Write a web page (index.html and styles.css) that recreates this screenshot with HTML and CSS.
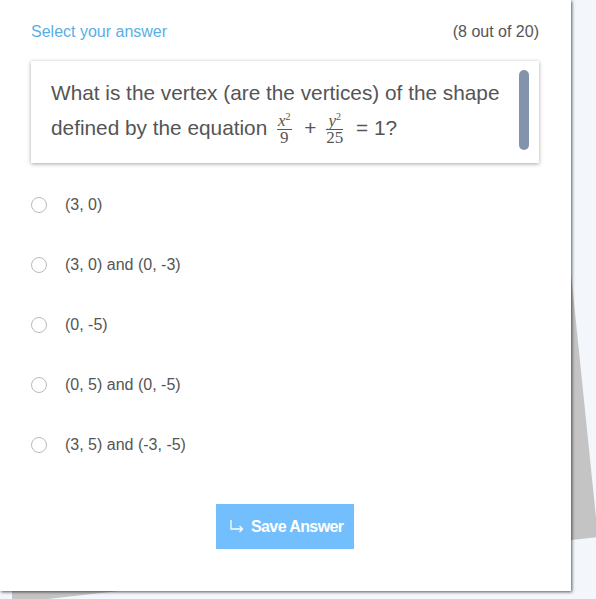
FILE: index.html
```html
<!DOCTYPE html>
<html lang="en">
<head>
    <meta charset="UTF-8">
    <meta name="viewport" content="width=device-width, initial-scale=1.0">
    <title>Quiz Question</title>
    <link rel="stylesheet" href="styles.css">
</head>
<body>

    <!-- Paper stack behind the card -->
    <svg class="paper-back" width="596" height="599" viewBox="0 0 596 599">
        <polygon points="543,0 598,537 12,603 12,0" fill="#c4c4c4"/>
    </svg>

    <!-- Question Card -->
    <div class="card">
        <div class="card-head">
            <span class="select-label">Select your answer</span>
            <span class="counter">(8 out of 20)</span>
        </div>

        <div class="question">
            <p>What is the vertex (are the vertices) of the shape defined by the equation
                <span class="frac"><span class="num"><i>x</i><sup>2</sup></span><span class="den">9</span></span>
                +
                <span class="frac"><span class="num"><i>y</i><sup>2</sup></span><span class="den">25</span></span>
                = 1?</p>
            <div class="scroll-thumb"></div>
        </div>

        <div class="options">
            <label class="option"><input type="radio" name="answer"><span>(3, 0)</span></label>
            <label class="option"><input type="radio" name="answer"><span>(3, 0) and (0, -3)</span></label>
            <label class="option"><input type="radio" name="answer"><span>(0, -5)</span></label>
            <label class="option"><input type="radio" name="answer"><span>(0, 5) and (0, -5)</span></label>
            <label class="option"><input type="radio" name="answer"><span>(3, 5) and (-3, -5)</span></label>
        </div>

        <div class="actions">
            <button class="save-btn">
                <svg width="15" height="15" viewBox="0 0 15 15">
                    <path d="M2 1 V10 H13.5 M10.5 7 L13.5 10 L10.5 13" fill="none" stroke="#fff" stroke-width="1.3"/>
                </svg>
                Save Answer
            </button>
        </div>
    </div>

</body>
</html>
```

FILE: styles.css
```css
body {
    font-family: "Liberation Sans", Arial, sans-serif;
    margin: 0;
    padding: 0;
    background-color: #f3f7fb;
    position: relative;
    height: 599px;
    overflow: hidden;
}
.paper-back {
    position: absolute;
    left: 0;
    top: 0;
}
.card {
    position: relative;
    width: 571px;
    box-sizing: border-box;
    background: #fff;
    padding: 23px 32px 42px 31px;
    box-shadow: 1px 1px 3px rgba(0, 0, 0, 0.65);
}
.card-head {
    display: flex;
    justify-content: space-between;
    font-size: 16px;
    line-height: 18px;
}
.select-label {
    color: #5aaee6;
}
.counter {
    color: #555;
}
.question {
    position: relative;
    margin-top: 20px;
    padding: 14px 28px 17px 20px;
    box-shadow: 0 1px 4px rgba(0, 0, 0, 0.35);
}
.question p {
    margin: 0;
    font-size: 20.8px;
    line-height: 35px;
    color: #555;
}
.frac {
    display: inline-flex;
    flex-direction: column;
    vertical-align: middle;
    text-align: center;
    font-family: "Liberation Serif", "DejaVu Serif", serif;
    font-size: 17px;
    line-height: 16px;
    margin: 0 7px 0 4px;
}
.frac .num {
    border-bottom: 1px solid #555;
    padding: 0 1px;
}
.frac .num sup {
    font-size: 10px;
    line-height: 0;
    vertical-align: 6px;
}
.scroll-thumb {
    position: absolute;
    top: 9px;
    right: 10px;
    width: 10px;
    height: 80px;
    border-radius: 5px;
    background-color: #8393ab;
}
.options {
    margin-top: 12px;
}
.option {
    display: flex;
    align-items: center;
    height: 60px;
    font-size: 16px;
    color: #555;
}
.option input {
    appearance: none;
    width: 16px;
    height: 16px;
    margin: 0 18px 0 0;
    border: 1px solid #bbb;
    border-radius: 50%;
    background: #fff;
}
.actions {
    margin-top: 29px;
    display: flex;
    justify-content: center;
}
.save-btn {
    display: flex;
    align-items: center;
    gap: 7px;
    width: 138px;
    height: 45px;
    padding: 0 0 0 13px;
    border: none;
    background-color: #73befc;
    color: #fff;
    font-family: "Liberation Sans", Arial, sans-serif;
    font-weight: bold;
    font-size: 16px;
    letter-spacing: -0.6px;
}
```
